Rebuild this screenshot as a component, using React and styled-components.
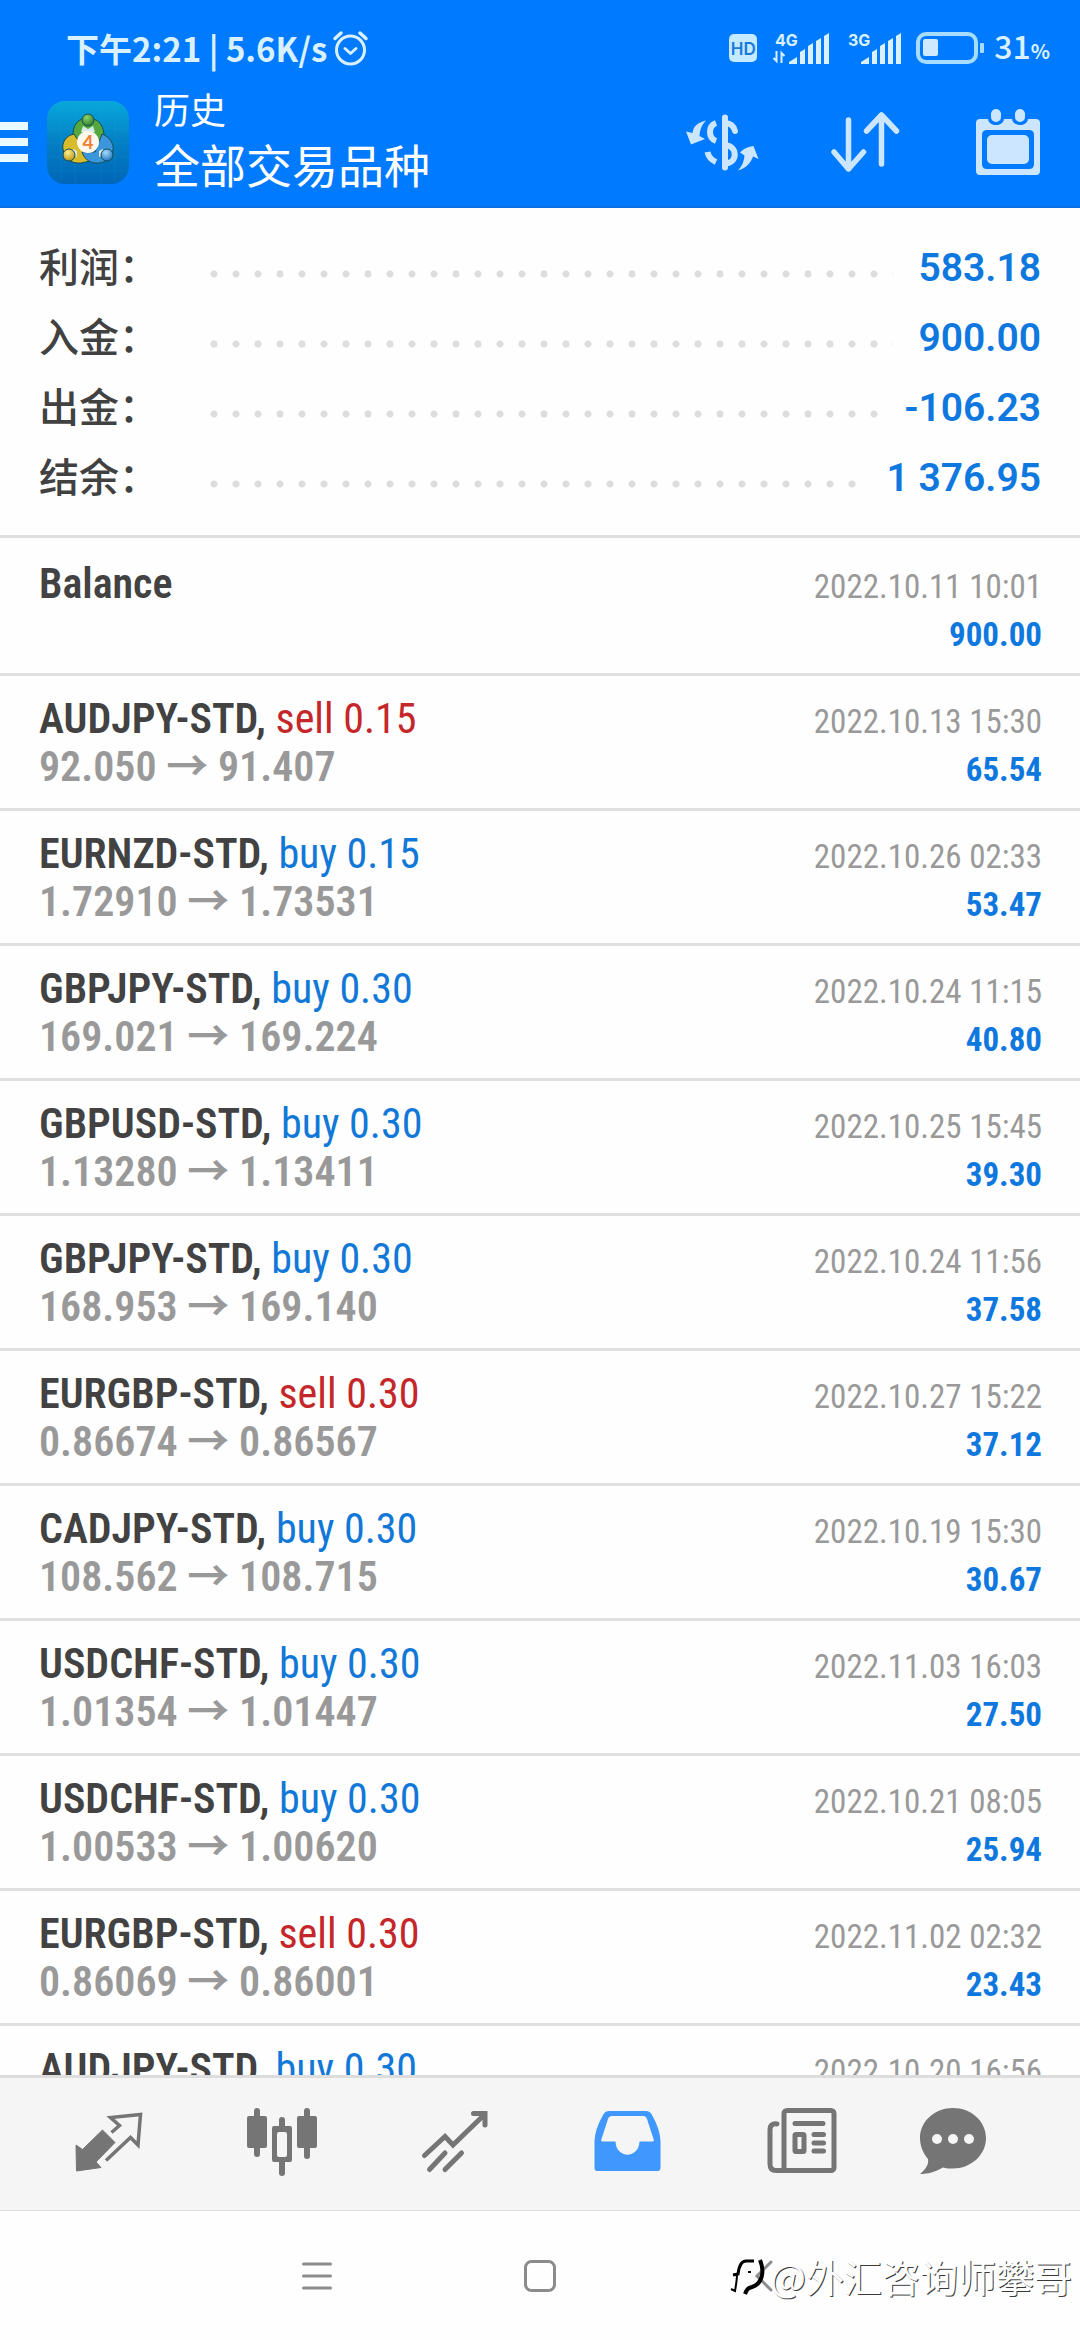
import styled, { createGlobalStyle } from 'styled-components';

const GlobalStyle = createGlobalStyle`
    * {
        box-sizing: border-box;
    }

    body {
        margin: 0;
        background: #fefefe;
        font-family: Roboto, 'Noto Sans CJK SC', sans-serif;
    }

    button {
        display: flex;
        align-items: center;
        justify-content: center;
        padding: 0;
        border: none;
        background: none;
        color: inherit;
        cursor: pointer;
    }

    svg {
        display: block;
        flex: none;
        overflow: visible;
    }
`;

const Screen = styled.div`
    display: flex;
    flex-direction: column;
    height: 100vh;
    overflow: hidden;
`;

const Header = styled.header`
    flex: none;
    background: #007aff;
    box-shadow: inset 0 -2px 0 #0a70e4;
    color: #ffffff;
`;

const StatusBar = styled.div`
    display: flex;
    align-items: center;
    height: 76px;
    padding: 19px 30px 0 66px;
    color: #d9f1ff;
    font-family: 'Noto Sans CJK SC', sans-serif;
    font-size: 33px;
    font-weight: 700;
    line-height: 40px;
`;

const StatusText = styled.span`
    margin-right: 6px;
    white-space: pre;
`;

const StatusIcons = styled.div`
    display: flex;
    align-items: center;
    gap: 15px;
    margin-left: auto;
`;

const HdBadge = styled.span`
    width: 28px;
    height: 28px;
    border-radius: 5px;
    background: #c4eaff;
    color: #1a78e0;
    font-family: Inter, sans-serif;
    font-size: 17px;
    font-weight: 600;
    line-height: 30px;
    text-align: center;
`;

const BatteryLevel = styled.span`
    margin-left: -6px;
    font-size: 32px;
    font-weight: 500;

    small {
        font-size: 20px;
        font-weight: 700;
    }
`;

const AppBar = styled.div`
    display: flex;
    align-items: center;
    height: 132px;
    padding-right: 40px;
`;

const MenuButton = styled.button`
    flex-direction: column;
    gap: 8px;
    width: 28px;
    height: 60px;
    margin-right: 19px;
`;

const MenuLine = styled.span`
    width: 100%;
    height: 8px;
    background: #e8faff;
`;

const Titles = styled.div`
    flex: 1;
    margin-left: 25px;
    padding-bottom: 8px;
    font-family: 'Noto Sans CJK SC', sans-serif;
`;

const ScreenName = styled.div`
    font-size: 36px;
    line-height: 50px;
`;

const SymbolFilter = styled.h1`
    margin: 0;
    font-size: 46px;
    font-weight: 400;
    line-height: 60px;
`;

const Actions = styled.div`
    display: flex;
    align-items: center;
    gap: 72px;
    color: #cce6ff;

    button:last-child {
        margin-left: 4px;
    }
`;

const Summary = styled.section`
    flex: none;
    padding: 23px 39px 24px;
    border-bottom: 3px solid #dedede;
`;

const SummaryRow = styled.div`
    display: flex;
    align-items: center;
    height: 70px;
`;

const SummaryLabel = styled.span`
    width: 157px;
    padding-bottom: 3px;
    color: #414141;
    font-family: 'Noto Sans CJK SC', sans-serif;
    font-size: 40px;
    font-weight: 500;
`;

const Dots = styled.span`
    flex: 1;
    height: 8px;
    margin: 16px 26px 0 0;
    background: radial-gradient(circle at 18px 4px, #dddddd 3px, transparent 4px)
        0 0 / 22px 8px repeat-x;
`;

const SummaryValue = styled.span`
    padding-top: 3px;
    color: #0f78de;
    font-size: 39px;
    font-weight: 600;
`;

const DealList = styled.ul`
    flex: 1;
    min-height: 0;
    margin: 0;
    padding: 3px 0 0;
    overflow: hidden;
    list-style: none;
    font-family: 'Roboto Condensed', 'Noto Sans CJK SC', sans-serif;
`;

const DealRow = styled.li`
    display: flex;
    justify-content: space-between;
    height: 135px;
    padding: 19px 38px 0 39px;
    border-bottom: 3px solid #e0e0e0;
    line-height: 48px;
`;

const DealInfo = styled.div`
    font-size: 42px;
    white-space: nowrap;
`;

const Symbol = styled.div`
    height: 48px;
    color: #424242;
    font-weight: 600;
`;

const Side = styled.span`
    color: ${({ $side }) => ($side === 'sell' ? '#c4262a' : '#1278d8')};
    font-weight: 400;
`;

const Prices = styled.div`
    height: 48px;
    color: #999999;
    font-weight: 600;
`;

const DealResult = styled.div`
    font-size: 33px;
    text-align: right;
`;

const DealTime = styled.time`
    display: block;
    height: 48px;
    padding-top: 3px;
    color: #999999;
`;

const Profit = styled.div`
    height: 48px;
    padding-top: 3px;
    color: #0f78de;
    font-weight: 700;
`;

const TabBar = styled.nav`
    display: flex;
    flex: none;
    height: 136px;
    padding: 0 62px 0 22px;
    border-top: 3px solid #dddddd;
    border-bottom: 1px solid #dcdcdc;
    background: #f5f5f5;
`;

const Tab = styled.button`
    flex: 4;
    color: ${({ $active }) => ($active ? '#4098ff' : '#757575')};

    && {
        padding-bottom: 4px;
    }

    &:last-child {
        flex: 3;
    }
`;

const SystemNav = styled.nav`
    display: flex;
    flex: none;
    align-items: center;
    justify-content: center;
    gap: 159px;
    position: relative;
    height: 129px;
    color: #8c8c8c;

    button {
        width: 64px;
        height: 64px;
    }
`;

const Watermark = styled.div`
    display: flex;
    align-items: center;
    gap: 6px;
    position: absolute;
    right: 8px;
    bottom: 36px;
    color: #ffffff;
    font-family: 'Noto Sans CJK SC', sans-serif;
    font-size: 38px;
    line-height: 56px;
    text-shadow: 1px 1px 0 #3a3a3a;
    pointer-events: none;
`;

const AlarmIcon = () => (
    <svg width="35" height="36" viewBox="0 0 35 36" fill="none" stroke="currentColor" strokeWidth="3" strokeLinecap="round" strokeLinejoin="round">
        <circle cx="17.5" cy="20" r="14" />
        <path d="M12 18.500l5.500 5 5.500-5" />
        <path d="M2 8.500l6-5.500M33 8.500l-6-5.500" strokeWidth="3.500" />
    </svg>
);

const SignalIcon = ({ label, transfer }) => (
    <svg width="57" height="34" viewBox="0 0 57 34" fill="currentColor">
        <text x={transfer ? 3 : 4} y="15" fontSize="16" fontWeight="700" fontFamily="Inter, sans-serif">
            {label}
        </text>
        {transfer && (
            <path d="M4.500 20v10l-3-3M9.500 32V22l3 3" fill="none" stroke="currentColor" strokeWidth="2" />
        )}
        <path d="M17 33v-2l8-5v7zM28 33V21l5-3v15zM36 33V15l5-3v21zM44 33V10l5-3v26zM52 33V5l5-3v31z" />
    </svg>
);

const BatteryIcon = () => (
    <svg width="69" height="32" viewBox="0 0 69 32">
        <rect x="2" y="2" width="58" height="28" rx="8" fill="none" stroke="#a5dcff" strokeWidth="4" />
        <rect x="7" y="7" width="15" height="17" rx="2" fill="#cfeaff" />
        <rect x="64" y="11" width="4" height="10" rx="1" fill="#a5dcff" />
    </svg>
);

const AppLogo = () => (
    <svg width="82" height="83" viewBox="0 0 82 83">
        <defs>
            <linearGradient id="logoBg" x1="0" y1="0" x2="0" y2="1">
                <stop offset="0" stopColor="#08a8dc" />
                <stop offset="0.5" stopColor="#047fc4" />
                <stop offset="1" stopColor="#0065b8" />
            </linearGradient>
            <radialGradient id="logoGreen" cx="0.4" cy="0.3" r="0.8">
                <stop offset="0" stopColor="#8fd468" />
                <stop offset="1" stopColor="#1d6f2a" />
            </radialGradient>
            <radialGradient id="logoGold" cx="0.4" cy="0.3" r="0.8">
                <stop offset="0" stopColor="#fff08a" />
                <stop offset="1" stopColor="#b08a10" />
            </radialGradient>
            <radialGradient id="logoBlue" cx="0.4" cy="0.3" r="0.8">
                <stop offset="0" stopColor="#a4dcff" />
                <stop offset="1" stopColor="#1668b4" />
            </radialGradient>
        </defs>
        <rect width="82" height="83" rx="18" fill="url(#logoBg)" />
        <path d="M14 2v79M28 0v83M54 0v83M68 2v79M0 28h82M0 42h82M0 56h82M0 70h82" stroke="#28b0d8" strokeOpacity="0.15" />
        <g stroke="#174f52" strokeWidth="1">
            <path d="M26 37C25 23 32 17 41 17s17 6 16 22l-5 8-8-8z" fill="#55a83e" />
            <path d="M27 33c-9 2-12 9-11 15 1 9 8 15 18 14l9-2-7-13z" fill="#d8bc2c" />
            <path d="M55 33c8 3 12 10 11 16-1 9-9 14-18 13-7-1-11-5-13-11h13z" fill="#3b96dc" />
            <path d="M36 25l5 3 5-3 2 6H34zM26 48l4 2v6l-5-2zM56 48l-4 2v6l5-2z" fill="#d6ebe8" stroke="none" />
            <circle cx="41" cy="19" r="6" fill="url(#logoGreen)" />
            <circle cx="22" cy="54" r="6" fill="url(#logoGold)" />
            <circle cx="60" cy="54" r="6" fill="url(#logoBlue)" />
        </g>
        <circle cx="41" cy="41" r="11" fill="#fff8ee" />
        <text x="41" y="48" fill="#f08030" fontFamily="Lato, sans-serif" fontSize="19" fontWeight="700" textAnchor="middle">
            4
        </text>
    </svg>
);

const CurrencyIcon = () => (
    <svg width="73" height="57" viewBox="0 0 73 57" fill="none" stroke="currentColor" strokeWidth="6" strokeLinecap="round">
        <path d="M39 3.500v50" />
        <path d="M39 9c5 0 9 3 10 8M39 31c13 1 13 18 0 18.500" />
        <path d="M30 9c-8 3-8 15 0 18M21.500 38c1 5 4 8 8.500 10" strokeLinecap="butt" />
        <path d="M20 6.500C10 9 7.500 13 6.500 19L0 17.500l5 13 14-5.500-5.500-3C14 15 16 11 20 6.500zM52 56.500c4-4 6-9 6.500-15L54 38.500c4-4 8-6 13.500-6.500l5 13-5.500-2.500c-2 6-7 12-15 14z" fill="currentColor" stroke="none" />
    </svg>
);

const SortIcon = () => (
    <svg width="69" height="60" viewBox="0 0 69 60" fill="none" stroke="currentColor" strokeWidth="5.500" strokeLinecap="round" strokeLinejoin="round">
        <path d="M17.500 8v49M3 40l14.500 17L32.500 40" />
        <path d="M50.500 52V3M35.500 19L50.500 3l15 16" />
    </svg>
);

const CalendarIcon = () => (
    <svg width="64" height="66" viewBox="0 0 64 66" fill="currentColor">
        <path fillRule="evenodd" d="M4 10h8c1 8 15 8 16 0h8c1 8 15 8 16 0h8q4 0 4 4v48q0 4-4 4H4q-4 0-4-4V14q0-4 4-4zM11 21q-5 0-5 5v29q0 5 5 5h42q5 0 5-5V26q0-5-5-5z" />
        <rect x="15" y="0" width="10" height="13" rx="5" />
        <rect x="39" y="0" width="10" height="13" rx="5" />
        <rect x="11" y="26" width="42" height="29" rx="5" />
    </svg>
);

const QuotesIcon = () => (
    <svg width="68" height="68" viewBox="0 0 68 68">
        <path d="M1 37l6.500 4.500L27.500 22 40 34.500 21 54l5 5.500L1.500 63z" fill="currentColor" stroke="currentColor" strokeLinejoin="round" />
        <path d="M36.500 24.500l8-7-9-8 30-3L63 37l-7.500-7.500L31 52.500" fill="none" stroke="currentColor" strokeWidth="3.500" />
    </svg>
);

const ChartIcon = () => (
    <svg width="70" height="68" viewBox="0 0 70 68" fill="currentColor">
        <rect x="7" y="0" width="6" height="49" rx="3" />
        <rect x="0" y="8" width="20" height="32" rx="2" />
        <rect x="57" y="0" width="6" height="51" rx="3" />
        <rect x="50" y="8" width="20" height="32" rx="2" />
        <rect x="32" y="9" width="6" height="13" rx="3" />
        <rect x="32" y="50" width="6" height="18" rx="3" />
        <path fillRule="evenodd" d="M27 18h16q2 0 2 2v32q0 2-2 2H27q-2 0-2-2V20q0-2 2-2zM32 24q-2 0-2 2v21q0 2 2 2h6q2 0 2-2V26q0-2-2-2z" />
    </svg>
);

const TradeIcon = () => (
    <svg width="68" height="68" viewBox="0 0 68 68" fill="none" stroke="currentColor" strokeWidth="5" strokeLinecap="round">
        <path d="M3.500 47.500L24 28.500l8 8.500L63 7" />
        <path d="M52.500 5.500H64V17" />
        <path d="M24 45L8.500 61.500M40.500 45L24 61.500" />
    </svg>
);

const HistoryIcon = () => (
    <svg width="68" height="68" viewBox="0 0 68 68" fill="currentColor">
        <path fillRule="evenodd" d="M15 3h37q4 0 6 4 8 14 8.500 26v27q0 3-3 3H3.500q-3 0-3-3V33Q1 21 9 7q2-4 6-4zM18 8q-3 0-4 3L7.500 31q-1 2.500 1 2.500h13C22 51 45 51 45.500 33.500h13q2 0 1-2.500L53 11q-1-3-4-3z" />
    </svg>
);

const NewsIcon = () => (
    <svg width="71" height="68" viewBox="0 0 71 68" fill="none" stroke="currentColor" strokeWidth="5">
        <rect x="18" y="2.500" width="50" height="60" rx="3" />
        <path d="M11 16q-7-1-7 6v34q0 6.500 6 6.500h10" strokeLinecap="round" />
        <rect x="29" y="26.500" width="9" height="17" rx="1" />
        <path d="M29 15.500h28M48 26.500h9.500M48 35h9.500M48 43h9.500" strokeLinecap="round" />
    </svg>
);

const MessagesIcon = () => (
    <svg width="68" height="68" viewBox="0 0 68 68" fill="currentColor">
        <path d="M34 0c18 0 33 13 33 30S52 60.500 34 60.500c-4 0-7 0-10-1C16 64 9 66 1 66c6-5 9-10 8-15C4 45 1 38 1 30 1 13 16 0 34 0z" />
        <g fill="#f5f5f5">
            <circle cx="18" cy="31" r="5" />
            <circle cx="34" cy="31" r="5" />
            <circle cx="50" cy="31" r="5" />
        </g>
    </svg>
);

const WatermarkLogo = () => (
    <svg width="34" height="44" viewBox="0 0 34 44" fill="none" stroke="#000000">
        <path d="M3 21l5-1c1-8 3-13 8-13h8" strokeWidth="3" />
        <path d="M7 20c0 6-1 11-2 17l-4-2" strokeWidth="2" />
        <path d="M30 6c5 12 2 24-8 27-4 1-5 2-7 7" strokeWidth="4" />
        <path d="M18 18h3" strokeWidth="2" />
    </svg>
);

const summary = [
    { label: '利润', value: '583.18' },
    { label: '入金', value: '900.00' },
    { label: '出金', value: '-106.23' },
    { label: '结余', value: '1 376.95' },
];

const deals = [
    { symbol: 'Balance', time: '2022.10.11 10:01', profit: '900.00' },
    { symbol: 'AUDJPY-STD', side: 'sell', volume: '0.15', open: '92.050', close: '91.407', time: '2022.10.13 15:30', profit: '65.54' },
    { symbol: 'EURNZD-STD', side: 'buy', volume: '0.15', open: '1.72910', close: '1.73531', time: '2022.10.26 02:33', profit: '53.47' },
    { symbol: 'GBPJPY-STD', side: 'buy', volume: '0.30', open: '169.021', close: '169.224', time: '2022.10.24 11:15', profit: '40.80' },
    { symbol: 'GBPUSD-STD', side: 'buy', volume: '0.30', open: '1.13280', close: '1.13411', time: '2022.10.25 15:45', profit: '39.30' },
    { symbol: 'GBPJPY-STD', side: 'buy', volume: '0.30', open: '168.953', close: '169.140', time: '2022.10.24 11:56', profit: '37.58' },
    { symbol: 'EURGBP-STD', side: 'sell', volume: '0.30', open: '0.86674', close: '0.86567', time: '2022.10.27 15:22', profit: '37.12' },
    { symbol: 'CADJPY-STD', side: 'buy', volume: '0.30', open: '108.562', close: '108.715', time: '2022.10.19 15:30', profit: '30.67' },
    { symbol: 'USDCHF-STD', side: 'buy', volume: '0.30', open: '1.01354', close: '1.01447', time: '2022.11.03 16:03', profit: '27.50' },
    { symbol: 'USDCHF-STD', side: 'buy', volume: '0.30', open: '1.00533', close: '1.00620', time: '2022.10.21 08:05', profit: '25.94' },
    { symbol: 'EURGBP-STD', side: 'sell', volume: '0.30', open: '0.86069', close: '0.86001', time: '2022.11.02 02:32', profit: '23.43' },
    { symbol: 'AUDJPY-STD', side: 'buy', volume: '0.30', time: '2022.10.20 16:56' },
];

const tabs = [
    { name: 'Quotes', Icon: QuotesIcon },
    { name: 'Chart', Icon: ChartIcon },
    { name: 'Trade', Icon: TradeIcon },
    { name: 'History', Icon: HistoryIcon, active: true },
    { name: 'News', Icon: NewsIcon },
    { name: 'Messages', Icon: MessagesIcon },
];

const Deal = ({ symbol, side, volume, open, close, time, profit }) => (
    <DealRow>
        <DealInfo>
            <Symbol>
                {symbol}
                {side && (
                    <>
                        , <Side $side={side}>{`${side} ${volume}`}</Side>
                    </>
                )}
            </Symbol>
            {open && <Prices>{`${open} → ${close}`}</Prices>}
        </DealInfo>
        <DealResult>
            <DealTime>{time}</DealTime>
            {profit && <Profit>{profit}</Profit>}
        </DealResult>
    </DealRow>
);

const App = () => (
    <>
        <GlobalStyle />
        <Screen>
            <Header>
                <StatusBar>
                    <StatusText>下午2:21 | 5.6K/s</StatusText>
                    <AlarmIcon />
                    <StatusIcons>
                        <HdBadge>HD</HdBadge>
                        <SignalIcon label="4G" transfer />
                        <SignalIcon label="3G" />
                        <BatteryIcon />
                        <BatteryLevel>
                            31<small>%</small>
                        </BatteryLevel>
                    </StatusIcons>
                </StatusBar>
                <AppBar>
                    <MenuButton aria-label="Menu">
                        <MenuLine />
                        <MenuLine />
                        <MenuLine />
                    </MenuButton>
                    <AppLogo />
                    <Titles>
                        <ScreenName>历史</ScreenName>
                        <SymbolFilter>全部交易品种</SymbolFilter>
                    </Titles>
                    <Actions>
                        <button aria-label="Symbol">
                            <CurrencyIcon />
                        </button>
                        <button aria-label="Sort">
                            <SortIcon />
                        </button>
                        <button aria-label="Period">
                            <CalendarIcon />
                        </button>
                    </Actions>
                </AppBar>
            </Header>
            <Summary>
                {summary.map(({ label, value }) => (
                    <SummaryRow key={label}>
                        <SummaryLabel>{label}：</SummaryLabel>
                        <Dots />
                        <SummaryValue>{value}</SummaryValue>
                    </SummaryRow>
                ))}
            </Summary>
            <DealList>
                {deals.map((deal, i) => (
                    <Deal key={i} {...deal} />
                ))}
            </DealList>
            <TabBar>
                {tabs.map(({ name, Icon, active }) => (
                    <Tab key={name} aria-label={name} $active={active}>
                        <Icon />
                    </Tab>
                ))}
            </TabBar>
            <SystemNav>
                <button aria-label="Recent apps">
                    <svg width="30" height="28" viewBox="0 0 30 28" stroke="currentColor" strokeWidth="3" strokeLinecap="round">
                        <path d="M1.500 2h27M1.500 14h27M1.500 26h27" />
                    </svg>
                </button>
                <button aria-label="Home">
                    <svg width="32" height="32" viewBox="0 0 32 32" fill="none" stroke="currentColor" strokeWidth="3">
                        <rect x="1.500" y="1.500" width="29" height="29" rx="6" />
                    </svg>
                </button>
                <button aria-label="Back">
                    <svg width="20" height="32" viewBox="0 0 20 32" fill="none" stroke="currentColor" strokeWidth="3" strokeLinecap="round">
                        <path d="M18 2L4 16l14 14" />
                    </svg>
                </button>
                <Watermark>
                    <WatermarkLogo />
                    @外汇咨询师攀哥
                </Watermark>
            </SystemNav>
        </Screen>
    </>
);

export default App;
